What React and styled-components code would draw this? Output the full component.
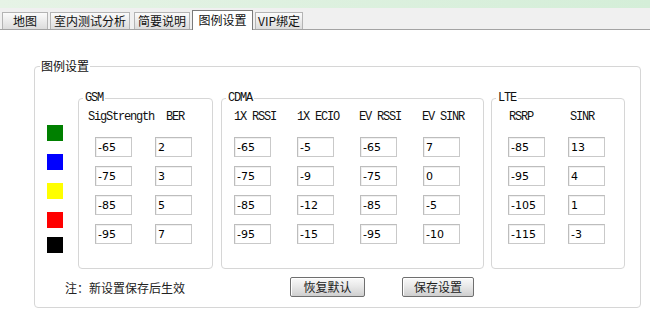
import styled, { createGlobalStyle } from "styled-components";

const GlobalStyle = createGlobalStyle`
  body {
    margin: 0;
    background: #ffffff;
    font-family: "Noto Sans CJK SC", "DejaVu Sans", sans-serif;
    font-size: 12px;
    color: #000;
  }
`;

const TopStrip = styled.div`
  height: 8px;
  background: linear-gradient(to right, #e6f3e6, #d4eed8);
`;

const TabBar = styled.div`
  display: flex;
  align-items: flex-end;
  gap: 2px;
  height: 21px;
  padding-left: 2px;
  background: #f0f0f0;
  border-bottom: 1px solid #a3a3a3;
`;

const Tab = styled.div`
  box-sizing: border-box;
  width: ${(p) => p.$w}px;
  height: ${(p) => (p.$active ? 20 : 17)}px;
  margin-left: ${(p) => p.$ml || 0}px;
  margin-bottom: ${(p) => (p.$active ? -1 : 0)}px;
  border: 1px solid ${(p) => (p.$active ? "#7a7a7a" : "#b4b4b4")};
  border-bottom: none;
  background: ${(p) =>
    p.$active ? "#ffffff" : "linear-gradient(#fbfbfb, #dcdcdc)"};
  font-size: 12px;
  line-height: ${(p) => (p.$active ? 18 : 15)}px;
  text-align: center;
  color: #111;
  white-space: nowrap;
`;

const Content = styled.div`
  padding: 29px 0 0 34px;
`;

const Box = styled.fieldset`
  box-sizing: border-box;
  margin: 0;
  padding: 0;
  min-width: 0;
  width: ${(p) => p.$w}px;
  border: 1px solid #d6d6d6;
  border-radius: 4px;
`;

const Title = styled.legend`
  margin-left: 5px;
  padding: 0 1px;
  font-size: 12px;
  line-height: 14px;
  color: #111;
`;

const SubTitle = styled.legend`
  margin-left: 4px;
  padding: 0 2px;
  font-family: "Liberation Mono", monospace;
  font-size: 12px;
  letter-spacing: -1.2px;
  line-height: 12px;
  color: #111;
`;

const Row = styled.div`
  display: flex;
  align-items: flex-start;
  padding: 19px 0 0 12px;
`;

const Swatches = styled.div`
  display: flex;
  flex-direction: column;
  gap: 13px;
  width: 31px;
  margin-top: 33px;
`;

const Swatch = styled.div`
  width: 16px;
  height: 16px;
  margin-top: ${(p) => p.$up || 0}px;
  background: ${(p) => p.$c};
`;

const Group = styled(Box)`
  margin-right: ${(p) => p.$mr || 0}px;
`;

const Columns = styled.div`
  display: flex;
  gap: ${(p) => p.$gap}px;
  padding: 6px 0 24px ${(p) => p.$pl}px;
`;

const Column = styled.div`
  display: flex;
  flex-direction: column;
  width: 37px;
`;

const Head = styled.div`
  height: 14px;
  margin: 0 0 13px ${(p) => p.$shift || 0}px;
  font-family: "Liberation Mono", monospace;
  font-size: 12px;
  letter-spacing: -1.2px;
  line-height: 14px;
  white-space: nowrap;
  color: #111;
`;

const Cells = styled.div`
  display: flex;
  flex-direction: column;
  gap: 9px;
`;

const Cell = styled.input`
  box-sizing: border-box;
  width: 37px;
  height: 20px;
  margin: 0;
  padding: 0 0 0 2px;
  border: 1px solid #c9c9c9;
  border-top-color: #bdbdbd;
  border-left-color: #bdbdbd;
  box-shadow: inset 1px 1px 0 #f0f0f0;
  font-family: "DejaVu Sans", sans-serif;
  font-size: 11px;
  color: #000;
  background: #fff;
  outline: none;
`;

const Footer = styled.div`
  display: grid;
  grid-template-columns: 225px 112px auto;
  align-items: center;
  height: 20px;
  margin-top: 8px;
  padding: 0 0 10px 30px;
`;

const Note = styled.span`
  font-size: 12px;
  color: #222;
  white-space: nowrap;
`;

const Button = styled.button`
  box-sizing: border-box;
  width: ${(p) => p.$w}px;
  height: 20px;
  padding: 0;
  border: 1px solid #6f6f6f;
  border-radius: 2px;
  background: linear-gradient(#fafafa 0%, #e9e9e9 45%, #cfcfcf 100%);
  box-shadow: inset 1px 1px 0 #ffffff;
  font-family: "Noto Sans CJK SC", sans-serif;
  font-size: 12px;
  line-height: 18px;
  color: #222;
`;

const colors = ["#008000", "#0000ff", "#ffff00", "#ff0000", "#000000"];

const groups = [
  {
    name: "GSM",
    w: 135,
    mr: 8,
    pl: 16,
    gap: 23,
    cols: [
      { head: "SigStrength", shift: -7, vals: ["-65", "-75", "-85", "-95"] },
      { head: "BER", shift: 11, vals: ["2", "3", "5", "7"] },
    ],
  },
  {
    name: "CDMA",
    w: 263,
    mr: 7,
    pl: 12,
    gap: 26,
    cols: [
      { head: "1X RSSI", vals: ["-65", "-75", "-85", "-95"] },
      { head: "1X ECIO", vals: ["-5", "-9", "-12", "-15"] },
      { head: "EV RSSI", shift: -1, vals: ["-65", "-75", "-85", "-95"] },
      { head: "EV SINR", shift: -1, vals: ["7", "0", "-5", "-10"] },
    ],
  },
  {
    name: "LTE",
    w: 134,
    pl: 16,
    gap: 23,
    cols: [
      { head: "RSRP", shift: 1, vals: ["-85", "-95", "-105", "-115"] },
      { head: "SINR", shift: 2, vals: ["13", "4", "1", "-3"] },
    ],
  },
];

const tabs = [
  { label: "地图", w: 46 },
  { label: "室内测试分析", w: 80 },
  { label: "简要说明", w: 56, ml: 2 },
  { label: "图例设置", w: 61, active: true },
  { label: "VIP绑定", w: 48 },
];

export default function App() {
  return (
    <>
      <GlobalStyle />
      <TopStrip />
      <TabBar>
        {tabs.map((t) => (
          <Tab key={t.label} $w={t.w} $ml={t.ml} $active={t.active}>
            {t.label}
          </Tab>
        ))}
      </TabBar>
      <Content>
        <Box $w={607}>
          <Title>图例设置</Title>
          <Row>
            <Swatches>
              {colors.map((c, i) => (
                <Swatch key={c} $c={c} $up={i === 4 ? -4 : 0} />
              ))}
            </Swatches>
            {groups.map((g) => (
              <Group key={g.name} $w={g.w} $mr={g.mr}>
                <SubTitle>{g.name}</SubTitle>
                <Columns $pl={g.pl} $gap={g.gap}>
                  {g.cols.map((col) => (
                    <Column key={col.head}>
                      <Head $shift={col.shift}>{col.head}</Head>
                      <Cells>
                        {col.vals.map((v, i) => (
                          <Cell key={i} defaultValue={v} />
                        ))}
                      </Cells>
                    </Column>
                  ))}
                </Columns>
              </Group>
            ))}
          </Row>
          <Footer>
            <Note>注：新设置保存后生效</Note>
            <Button $w={75}>恢复默认</Button>
            <Button $w={72}>保存设置</Button>
          </Footer>
        </Box>
      </Content>
    </>
  );
}
